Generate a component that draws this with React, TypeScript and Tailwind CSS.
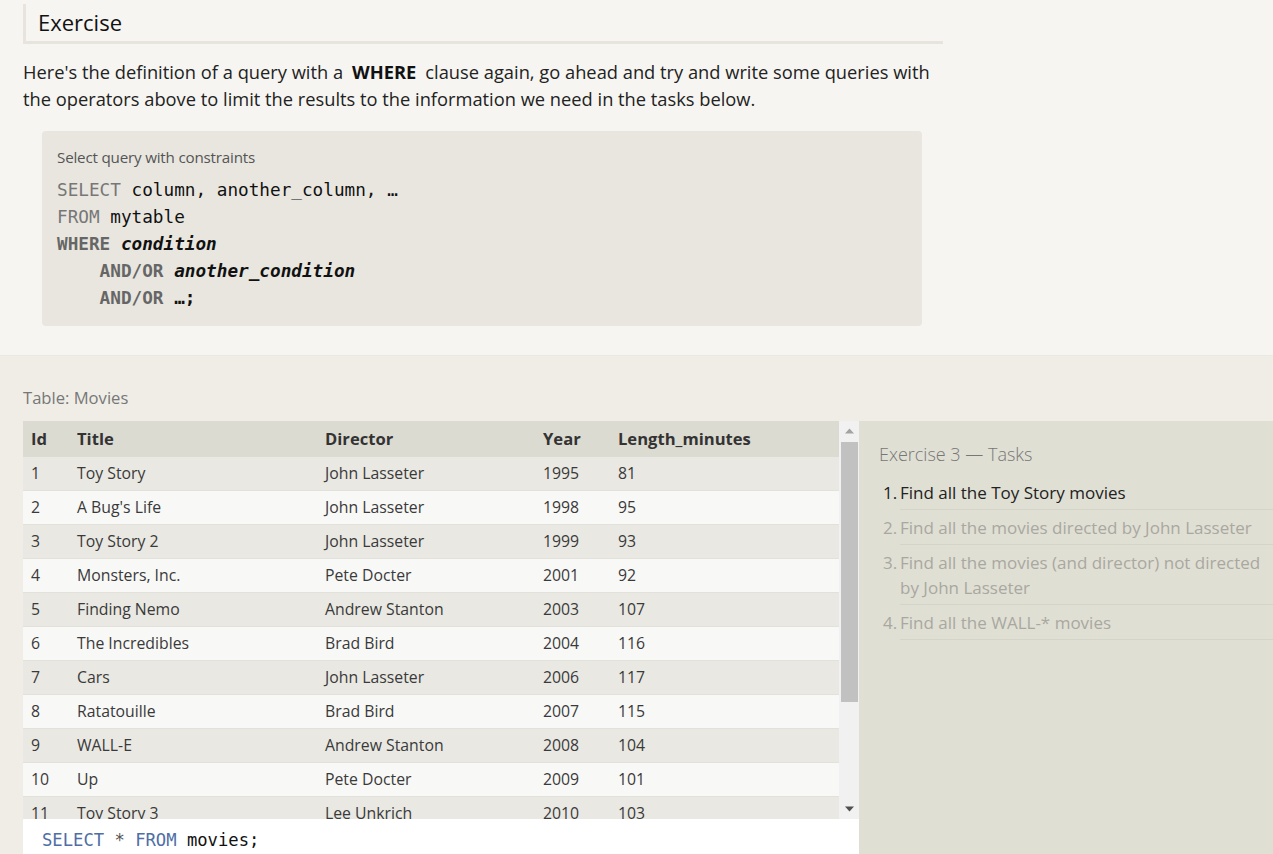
import type { ReactNode } from "react";

// Rows shown in the movies table
const movies = [
    [1, "Toy Story", "John Lasseter", 1995, 81],
    [2, "A Bug's Life", "John Lasseter", 1998, 95],
    [3, "Toy Story 2", "John Lasseter", 1999, 93],
    [4, "Monsters, Inc.", "Pete Docter", 2001, 92],
    [5, "Finding Nemo", "Andrew Stanton", 2003, 107],
    [6, "The Incredibles", "Brad Bird", 2004, 116],
    [7, "Cars", "John Lasseter", 2006, 117],
    [8, "Ratatouille", "Brad Bird", 2007, 115],
    [9, "WALL-E", "Andrew Stanton", 2008, 104],
    [10, "Up", "Pete Docter", 2009, 101],
    [11, "Toy Story 3", "Lee Unkrich", 2010, 103],
];

const tasks = [
    "Find all the Toy Story movies",
    "Find all the movies directed by John Lasseter",
    "Find all the movies (and director) not directed by John Lasseter",
    "Find all the WALL-* movies",
];

const cols = "grid grid-cols-[46px_248px_218px_75px_1fr]";
const mono = "font-['DejaVu_Sans_Mono',monospace]";

const Kw = ({ children, bold }: { children: ReactNode; bold?: boolean }) => (
    <span className={bold ? "font-bold text-[#666]" : "text-[#777]"}>{children}</span>
);

const App = () => {
    return (
        <div className="h-[854px] overflow-hidden bg-[#f6f5f1] font-['Open_Sans',sans-serif] text-[#222]">
            {/* Lesson text */}
            <section className="px-[23px] pt-[4px] pb-[29px]">
                <div className="w-[920px] h-[40px] border-l-[3px] border-b-[3px] border-[#e6e4dc] pl-[12px] flex items-center text-[22px] text-[#111]">
                    Exercise
                </div>
                <p className="mt-[14px] w-[920px] text-[18.3px] leading-[27px] text-[#222]">
                    Here's the definition of a query with a<strong className="mx-[9px] font-bold text-[#111]">WHERE</strong>clause again, go ahead and try and write some queries with the operators above to limit the results to the information we need in the tasks below.
                </p>

                {/* Syntax box */}
                <div className="mt-[19px] ml-[19px] w-[880px] rounded-[4px] bg-[#e8e6df] px-[15px] pt-[16px] pb-[14px]">
                    <div className="text-[15.2px] leading-[20px] text-[#555] tracking-[-0.2px]">Select query with constraints</div>
                    <pre className={`${mono} mt-[10px] text-[17.7px] leading-[27px] text-[#111]`}>
                        <div><Kw>SELECT</Kw> column, another_column, …</div>
                        <div><Kw>FROM</Kw> mytable</div>
                        <div><Kw bold>WHERE</Kw> <i className="font-bold">condition</i></div>
                        <div>    <Kw bold>AND/OR</Kw> <i className="font-bold">another_condition</i></div>
                        <div>    <Kw bold>AND/OR</Kw> <span className="font-bold">…;</span></div>
                    </pre>
                </div>
            </section>

            {/* Exercise area */}
            <section className="bg-[#efede6] border-t border-[#ebe9e1] h-full">
                <div className="pl-[23px] pt-[30px] text-[16.6px] leading-[24px] text-[#777]">Table: Movies</div>
                <div className="mt-[11px] flex">
                    <div className="ml-[23px] w-[836px] flex flex-col">
                        <div className="flex h-[398px]">
                            {/* Table */}
                            <div className="w-[816px] overflow-hidden text-[#333]">
                                <div className={`${cols} h-[36px] items-center bg-[#dcdbd2] font-bold text-[16.6px]`}>
                                    <div className="pl-2">Id</div>
                                    <div className="pl-2">Title</div>
                                    <div className="pl-2">Director</div>
                                    <div className="pl-2">Year</div>
                                    <div className="pl-2">Length_minutes</div>
                                </div>
                                {movies.map((m, i) => (
                                    <div
                                        key={i}
                                        className={`${cols} h-[34px] items-center border-b border-[#e2e1da] text-[15.8px] text-[#3a3a3a] ${i % 2 === 0 ? "bg-[#e9e8e2]" : "bg-[#f8f8f6]"}`}
                                    >
                                        {m.map((c, j) => (
                                            <div key={j} className="pl-2 whitespace-nowrap">{c}</div>
                                        ))}
                                    </div>
                                ))}
                            </div>

                            {/* Scrollbar */}
                            <div className="w-[20px] bg-[#f1f1f1] flex flex-col items-center">
                                <svg width="9" height="6" viewBox="0 0 9 6" className="mt-[7px]"><path d="M0 5.5 L4.5 0.5 L9 5.5 Z" fill="#a3a3a3" /></svg>
                                <div className="mt-[8px] w-[17px] h-[260px] bg-[#c1c1c1]" />
                                <div className="flex-1" />
                                <svg width="9" height="6" viewBox="0 0 9 6" className="mb-[7px]"><path d="M0 0.5 L4.5 5.5 L9 0.5 Z" fill="#505050" /></svg>
                            </div>
                        </div>

                        {/* Query editor */}
                        <div className={`${mono} bg-white h-[60px] pl-[19px] pt-[9px] text-[17.2px] leading-[24px] text-[#111]`}>
                            <span className="text-[#4e6ea5]">SELECT</span> <span className="text-[#555]">*</span> <span className="text-[#4e6ea5]">FROM</span> movies;
                        </div>
                    </div>

                    {/* Tasks */}
                    <div className="flex-1 bg-[#e0dfd4] pt-[21px] h-[460px]">
                        <div className="pl-[20px] text-[18px] leading-[25px] font-light text-[#777]">Exercise 3 — Tasks</div>
                        <ol className="mt-[8px] pl-[24px] text-[17px] leading-[25px]">
                            {tasks.map((t, i) => (
                                <li key={i} className={`flex ${i === 0 ? "text-[#222]" : "text-[#a9a8a0]"}`}>
                                    <span className="w-[17px] shrink-0 pt-[5px]">{i + 1}.</span>
                                    <div className="flex-1 pt-[5px] pb-[4px] border-b border-[#d5d4c8]">{t}</div>
                                </li>
                            ))}
                        </ol>
                    </div>
                </div>
            </section>
        </div>
    );
};

export default App;
